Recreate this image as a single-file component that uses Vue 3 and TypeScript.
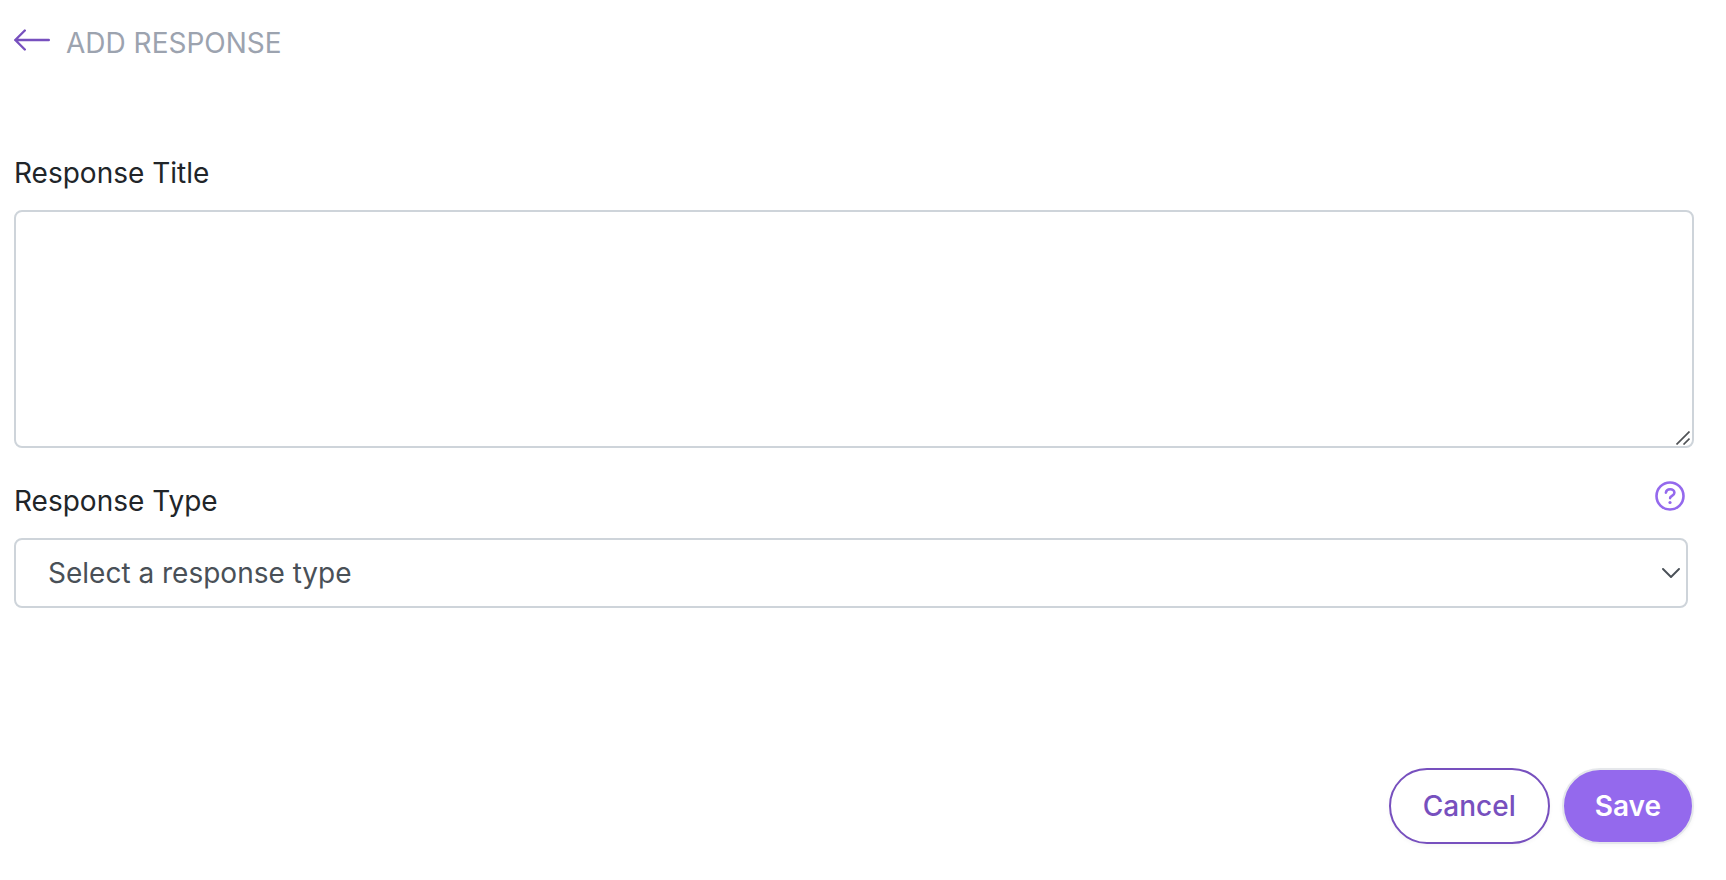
<script setup lang="ts">
import { ref } from 'vue'

const title = ref('')
const responseType = ref('')
const responseTypes: string[] = ['Text', 'Link', 'File']
</script>

<template>
  <main class="page">
    <header class="header">
      <a class="back" href="#" aria-label="Back">
        <svg width="36" height="22" viewBox="0 0 36 22" fill="none" stroke="currentColor" stroke-width="2.400" stroke-linecap="round" stroke-linejoin="round">
          <path d="M10.800 1.500 1.300 11l9.500 9.500M1.300 11H34.800" />
        </svg>
      </a>
      <h1 class="heading">ADD RESPONSE</h1>
    </header>

    <form class="form" @submit.prevent>
      <label class="label" for="response-title">Response Title</label>
      <div class="area">
        <textarea id="response-title" v-model="title" class="control textarea"></textarea>
        <svg class="grip" width="14" height="14" viewBox="0 0 14 14" fill="none" stroke="#505356" stroke-width="1.700">
          <path d="M.5 13.500 13.500.5M7.500 13.500l6-6" />
        </svg>
      </div>

      <div class="type-row">
        <label class="label" for="response-type">Response Type</label>
        <button class="help" type="button" aria-label="Help">
          <svg width="30" height="30" viewBox="0 0 30 30" fill="none" stroke="currentColor" stroke-width="2.600" stroke-linecap="round" stroke-linejoin="round">
            <circle cx="15" cy="15" r="13.500" />
            <path d="M10.900 11.600c.3-2.300 2-3.400 4.200-3.400 2.500 0 4.300 1.500 4.300 3.600 0 3.100-4.300 3-4.300 5.300" />
            <circle cx="15" cy="21.500" r="1.600" fill="currentColor" stroke="none" />
          </svg>
        </button>
      </div>
      <select id="response-type" v-model="responseType" class="control select">
        <option value="">Select a response type</option>
        <option v-for="t in responseTypes" :key="t" :value="t">{{ t }}</option>
      </select>

      <div class="actions">
        <button class="button cancel" type="button">Cancel</button>
        <button class="button save" type="submit">Save</button>
      </div>
    </form>
  </main>
</template>

<style>
body {
  margin: 0;
  background: #fff;
}
</style>

<style scoped>
.page {
  box-sizing: border-box;
  padding: 22px 32px 36px 14px;
  font-family: Inter, "Liberation Sans", sans-serif;
  font-size: 28px;
  line-height: 42px;
  color: #212529;
}

.header {
  display: flex;
  align-items: flex-start;
  gap: 16px;
}

.back {
  display: flex;
  padding-top: 7px;
  color: #7750be;
}

.heading {
  margin: 0;
  font-size: 28px;
  font-weight: 400;
  color: #9ca3af;
}

.form {
  margin-top: 88px;
}

.label {
  display: block;
}

.control {
  box-sizing: border-box;
  display: block;
  border: 2px solid #ced4da;
  border-radius: 8px;
  background-color: #fff;
  font: inherit;
}

.area {
  position: relative;
  margin-top: 16px;
}

.textarea {
  width: 100%;
  height: 238px;
  padding: 12px 24px;
  resize: none;
  color: #212529;
}

.grip {
  position: absolute;
  right: 4px;
  bottom: 3px;
  pointer-events: none;
}

.type-row {
  display: flex;
  align-items: flex-start;
  justify-content: space-between;
  margin-top: 32px;
  padding-right: 9px;
}

.help {
  display: flex;
  padding: 1px 0 0;
  border: 0;
  background: none;
  color: #9469ed;
  cursor: pointer;
}

.select {
  width: calc(100% - 6px);
  height: 70px;
  margin-top: 16px;
  padding: 0 48px 0 32px;
  appearance: none;
  color: #495057;
  background-image: url("data:image/svg+xml,%3Csvg xmlns='http://www.w3.org/2000/svg' viewBox='0 0 18 10' fill='none' stroke='%23495057' stroke-width='1.900' stroke-linecap='round' stroke-linejoin='round'%3E%3Cpath d='M1 1l8 8 8-8'/%3E%3C/svg%3E");
  background-repeat: no-repeat;
  background-position: right 6px center;
  background-size: 18px 10px;
}

.actions {
  display: flex;
  justify-content: flex-end;
  gap: 12px;
  margin-top: 160px;
}

.button {
  height: 76px;
  padding: 0 32px;
  border: 2px solid;
  border-radius: 38px;
  font: inherit;
  font-weight: 500;
  cursor: pointer;
  box-shadow: 0 2px 4px rgba(0, 0, 0, 0.04);
}

.cancel {
  border-color: #7750be;
  background: #fff;
  color: #7750be;
}

.save {
  padding: 0 31px;
  border-color: #e5e7eb;
  background: #9469ed;
  color: #fff;
  font-weight: 600;
}
</style>
